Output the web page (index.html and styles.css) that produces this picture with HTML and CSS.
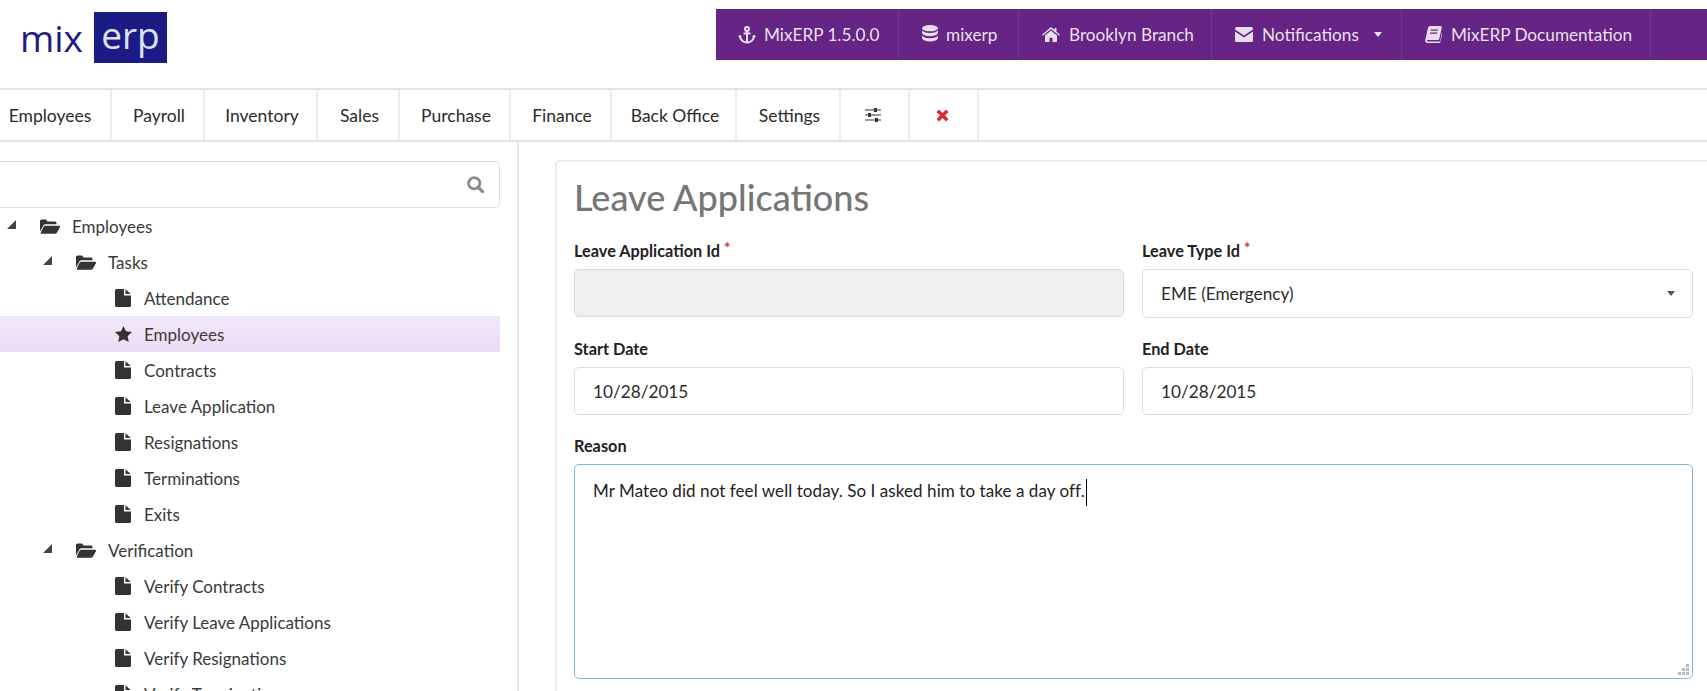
FILE: index.html
```html
<!DOCTYPE html>
<html lang="en">
<head>
<meta charset="utf-8">
<title>Leave Applications - MixERP</title>
<link rel="stylesheet" href="styles.css">
</head>
<body>
<svg class="defs" width="0" height="0" aria-hidden="true">
  <symbol id="i-file" viewBox="0 0 16 18"><path d="M1.5 0H9v6.5h7V16.5a1.5 1.5 0 0 1-1.5 1.5h-13A1.5 1.5 0 0 1 0 16.500V1.500A1.500 1.500 0 0 1 1.500 0zM10.500 0.300L15.700 5H10.500z"/></symbol>
  <symbol id="i-folder" viewBox="0 0 20 15"><path d="M0 12.500V2a1.500 1.500 0 0 1 1.500-1.500h4.500l1.500 2H15a1.500 1.500 0 0 1 1.500 1.500v1.200H5.500a2.500 2.500 0 0 0-2.200 1.300z"/><path d="M5 6.800h14a1 1 0 0 1 .9 1.400L17 13.500a2.500 2.500 0 0 1-2.200 1.300H1.500a.8.800 0 0 1-.7-1.200l2.700-5.800A2 2 0 0 1 5 6.800z"/></symbol>
  <symbol id="i-star" viewBox="0 0 18 17"><path d="M9 0l2.700 5.700 6.300.8-4.600 4.300 1.200 6.200L9 14l-5.600 3 1.200-6.200L0 6.500l6.300-.8z"/></symbol>
  <symbol id="i-anchor" viewBox="0 0 18 18"><g fill="none" stroke="currentColor" stroke-width="2"><circle cx="9" cy="3" r="2"/><path d="M9 5v11.500M5.500 7.500h7M2 10c0 4 3.500 6.500 7 6.500s7-2.500 7-6.500"/></g><path d="M0 11l2-2.500L4 11zM14 11l2-2.500 2 2.500z"/></symbol>
  <symbol id="i-db" viewBox="0 0 15 18"><ellipse cx="7.500" cy="3" rx="7.500" ry="3"/><path d="M0 5c1.500 2 4 2.600 7.500 2.600S13.500 7 15 5v2.800c-1 2-4 2.800-7.500 2.800S1 9.800 0 7.800zM0 10c1.500 2 4 2.600 7.500 2.600s6-.6 7.500-2.600v2.800c-1 2-4 2.800-7.500 2.800S1 14.800 0 12.800z"/></symbol>
  <symbol id="i-home" viewBox="0 0 18 15"><path d="M9 0l3.500 3V1h2v3.700L18 7.800l-.8 1L9 2 .8 8.800 0 7.800z"/><path d="M9 3.400l6 5V15h-4.500v-4.200h-3V15H3V8.400z"/></symbol>
  <symbol id="i-mail" viewBox="0 0 18 15"><path d="M1.500 0h15A1.500 1.500 0 0 1 18 1.500v1L9 8.500 0 2.500v-1A1.500 1.500 0 0 1 1.500 0zM0 4.500l9 6 9-6v9a1.500 1.500 0 0 1-1.500 1.500h-15A1.500 1.500 0 0 1 0 13.500z"/></symbol>
  <symbol id="i-book" viewBox="0 0 17 17"><path d="M5 0h10.500c1 0 1.500.8 1.300 1.700l-2.500 11c-.2.800-.8 1.300-1.600 1.300H2.500c-.8 0-.9 1.500.1 1.500h11.600c.5 0 .8-.3.900-.7l2-9.300.4 1-2.300 9.800c-.1.400-.5.700-1 .7H2.500C.8 17 0 15.500.2 14L3 2c.2-1 1-2 2-2zM6 3.500l-.3 1.200h7l.3-1.200zM5.300 6.500L5 7.700h7l.3-1.200z" fill-rule="evenodd"/></symbol>
  <symbol id="i-sliders" viewBox="0 0 16 14"><path d="M0 1.500h9v1H0zM12 1.500h4v1h-4zM9 0h3v4H9zM0 6.500h3v1H0zM6 6.500h10v1H6zM3 5h3v4H3zM0 11.500h10v1H0zM13 11.500h3v1h-3zM10 10h3v4h-3z"/></symbol>
  <symbol id="i-x" viewBox="0 0 13 13"><path d="M3 .5l3.500 3.500L10 .5 12.500 3 9 6.500l3.500 3.500-2.500 2.500L6.500 9 3 12.500.5 10 4 6.500.5 3z"/></symbol>
  <symbol id="i-search" viewBox="0 0 16 16"><circle cx="6.800" cy="6.800" r="5.300" fill="none" stroke="currentColor" stroke-width="2.600"/><path d="M10.500 10.500l4.200 4.200" stroke="currentColor" stroke-width="3" stroke-linecap="round"/></symbol>
</svg>

<header class="top">
  <a class="logo" href="#"><span class="logo-mix">mix</span><span class="logo-erp">erp</span></a>
  <nav class="topbar">
    <a class="topbar-item"><svg class="ti ti-anchor"><use href="#i-anchor"/></svg>MixERP 1.5.0.0</a>
    <a class="topbar-item"><svg class="ti ti-db"><use href="#i-db"/></svg>mixerp</a>
    <a class="topbar-item"><svg class="ti ti-home"><use href="#i-home"/></svg>Brooklyn Branch</a>
    <a class="topbar-item"><svg class="ti ti-mail"><use href="#i-mail"/></svg>Notifications<span class="caret caret-light"></span></a>
    <a class="topbar-item"><svg class="ti ti-book"><use href="#i-book"/></svg>MixERP Documentation</a>
    <a class="topbar-item"></a>
  </nav>
</header>

<nav class="menu">
  <a class="menu-item menu-first">Employees</a>
  <a class="menu-item">Payroll</a>
  <a class="menu-item">Inventory</a>
  <a class="menu-item">Sales</a>
  <a class="menu-item">Purchase</a>
  <a class="menu-item">Finance</a>
  <a class="menu-item">Back Office</a>
  <a class="menu-item">Settings</a>
  <a class="menu-item menu-icon"><svg class="mi-sliders"><use href="#i-sliders"/></svg></a>
  <a class="menu-item menu-icon"><svg class="mi-x"><use href="#i-x"/></svg></a>
</nav>

<div class="layout">
  <aside class="side">
    <div class="search"><svg class="search-icon"><use href="#i-search"/></svg></div>
    <ul class="tree">
      <li class="node l0"><span class="arrow"></span><svg class="ic-folder"><use href="#i-folder"/></svg>Employees</li>
      <li class="node l1"><span class="arrow"></span><svg class="ic-folder"><use href="#i-folder"/></svg>Tasks</li>
      <li class="node l2"><svg class="ic-file"><use href="#i-file"/></svg>Attendance</li>
      <li class="node l2 active"><svg class="ic-file ic-star"><use href="#i-star"/></svg>Employees</li>
      <li class="node l2"><svg class="ic-file"><use href="#i-file"/></svg>Contracts</li>
      <li class="node l2"><svg class="ic-file"><use href="#i-file"/></svg>Leave Application</li>
      <li class="node l2"><svg class="ic-file"><use href="#i-file"/></svg>Resignations</li>
      <li class="node l2"><svg class="ic-file"><use href="#i-file"/></svg>Terminations</li>
      <li class="node l2"><svg class="ic-file"><use href="#i-file"/></svg>Exits</li>
      <li class="node l1"><span class="arrow"></span><svg class="ic-folder"><use href="#i-folder"/></svg>Verification</li>
      <li class="node l2"><svg class="ic-file"><use href="#i-file"/></svg>Verify Contracts</li>
      <li class="node l2"><svg class="ic-file"><use href="#i-file"/></svg>Verify Leave Applications</li>
      <li class="node l2"><svg class="ic-file"><use href="#i-file"/></svg>Verify Resignations</li>
      <li class="node l2"><svg class="ic-file"><use href="#i-file"/></svg>Verify Terminations</li>
    </ul>
  </aside>

  <main class="main">
    <section class="card">
      <h1 class="title">Leave Applications</h1>
      <form class="form">
        <div class="field">
          <label class="label">Leave Application Id<span class="req">*</span></label>
          <div class="control control-disabled"></div>
        </div>
        <div class="field">
          <label class="label">Leave Type Id<span class="req">*</span></label>
          <div class="control control-select">EME (Emergency)<span class="caret"></span></div>
        </div>
        <div class="field">
          <label class="label">Start Date</label>
          <div class="control">10/28/2015</div>
        </div>
        <div class="field">
          <label class="label">End Date</label>
          <div class="control">10/28/2015</div>
        </div>
        <div class="field field-wide">
          <label class="label">Reason</label>
          <div class="control-area"><span class="area-text">Mr Mateo did not feel well today. So I asked him to take a day off.</span><span class="text-caret"></span><span class="grip"></span></div>
        </div>
      </form>
    </section>
  </main>
</div>
</body>
</html>
```
FILE: styles.css
```css
* { box-sizing: border-box; }
html, body { margin: 0; padding: 0; height: 691px; overflow: hidden; background: #fff; }
body { font-family: "Lato", "Open Sans", sans-serif; font-size: 16px; color: #333; }
.defs { position: absolute; }

.top { height: 88px; display: flex; align-items: flex-start; justify-content: space-between; }
.logo { display: flex; align-items: center; height: 51px; margin: 12px 0 0 20px; text-decoration: none; }
.logo-mix { width: 74px; font-family: "Open Sans", sans-serif; font-size: 37px; font-weight: 400; color: #1e1c82; line-height: 51px; }
.logo-erp { width: 73px; height: 51px; background: #1b1b85; color: #dfe0f2; font-family: "Open Sans", sans-serif; font-size: 37px; font-weight: 400; line-height: 46px; text-align: center; }

.topbar { margin-top: 9px; height: 51px; width: 991px; background: #662484; display: grid; grid-template-columns: 183px 120px 193px 190px 249px 56px; }
.topbar-item { display: flex; align-items: center; padding-left: 23px; border-right: 1px solid rgba(255,255,255,.09); color: rgba(255,255,255,.88); font-size: 17.2px; white-space: nowrap; }
.topbar-item:last-child { border-right: 0; }
.ti { fill: currentColor; color: rgba(255,255,255,.85); flex: none; margin-right: 8px; }
.ti-anchor { width: 18px; height: 18px; margin-left: -1px; }
.ti-db { width: 16px; height: 19px; }
.ti-home { width: 18px; height: 15px; margin-right: 9px; }
.ti-mail { width: 18px; height: 15px; margin-right: 9px; }
.ti-book { width: 17px; height: 17px; margin-right: 9px; }
.caret { display: inline-block; width: 0; height: 0; border-left: 4px solid transparent; border-right: 4px solid transparent; border-top: 5px solid #555; }
.caret-light { border-top-color: rgba(255,255,255,.85); margin-left: 15px; }

.menu { height: 54px; display: grid; grid-template-columns: 112px 93px 113px 82px 111px 101px 125px 104px 69px 69px 1fr; border-top: 2px solid #e2e2e2; border-bottom: 2px solid #e2e2e2; }
.menu-item { display: flex; align-items: center; justify-content: center; padding-left: 3px; border-right: 2px solid #ececec; font-size: 17.5px; color: #2b2b2b; white-space: nowrap; }
.menu-first { padding: 0 10px 0 0; }
.menu-icon { padding: 0 3px 0 0; }
.mi-sliders { width: 16px; height: 14px; fill: #2f3640; }
.mi-x { width: 13px; height: 13px; fill: #db2b33; }

.layout { display: flex; height: 549px; overflow: hidden; }
.side { width: 519px; flex: none; border-right: 2px solid #e8e8e8; padding-top: 19px; }
.search { width: 500px; height: 47px; border: 1px solid #dedede; border-left: 0; border-radius: 0 5px 5px 0; display: flex; align-items: center; justify-content: flex-end; padding-right: 15px; }
.search-icon { width: 17px; height: 17px; color: #8a8a8a; fill: #8a8a8a; }
.tree { list-style: none; margin: 0; padding: 0; width: 500px; }
.node { height: 36px; display: flex; align-items: center; font-size: 17px; color: #3a3a3a; white-space: nowrap; position: relative; }
.l0 { padding-left: 40px; }
.l1 { padding-left: 76px; }
.l2 { padding-left: 115px; }
.arrow { position: absolute; top: 12px; width: 0; height: 0; border-style: solid; border-width: 0 0 9px 9px; border-color: transparent transparent #444 transparent; }
.l0 .arrow { left: 7px; }
.l1 .arrow { left: 43px; }
.ic-folder { width: 20px; height: 15px; fill: #333; margin-right: 12px; flex: none; }
.ic-file { width: 16px; height: 18px; fill: #333; margin-right: 13px; flex: none; }
.ic-star { width: 17px; height: 16px; margin-right: 12px; }
.active { background: linear-gradient(#f2e7f9, #ebdcf5); }

.main { flex: 1; padding: 18px 0 0 36px; min-width: 0; }
.card { height: 600px; margin-right: -20px; border: 2px solid #ececec; border-right: 0; border-bottom: 0; border-radius: 5px 0 0 0; padding: 14px 34px 0 17px; }
.title { margin: 0; font-size: 36px; line-height: 42px; font-weight: 500; color: #767676; }
.form { display: grid; grid-template-columns: 550px 551px; column-gap: 18px; row-gap: 19px; margin-top: 21px; }
.field-wide { grid-column: 1 / -1; }
.label { display: block; height: 24px; margin-bottom: 6px; font-size: 16.3px; font-weight: 700; line-height: 24px; color: #222; white-space: nowrap; }
.req { color: #db2828; font-size: 15px; margin-left: 4px; position: relative; top: -4px; }
.control { height: 48px; border: 1px solid #dcdcdc; border-radius: 5px; padding: 1px 18px 0; display: flex; align-items: center; font-size: 17.2px; color: #2b2b2b; background: #fff; position: relative; }
.control-disabled { background: #efefef; }
.control-select { justify-content: space-between; padding: 0 17px 0 18px; height: 49px; }
.control-area { height: 215px; border: 1px solid #7db8dc; border-radius: 5px; padding: 12px 18px; font-size: 17px; letter-spacing: .07px; line-height: 28px; color: #222; position: relative; }
.text-caret { display: inline-block; width: 1px; height: 27px; background: #000; vertical-align: middle; margin-left: 1px; }
.grip { position: absolute; right: 3px; bottom: 3px; width: 11px; height: 11px; background:
  linear-gradient(#bbb,#bbb) 8px 0/3px 3px no-repeat,
  linear-gradient(#bbb,#bbb) 4px 4px/3px 3px no-repeat,
  linear-gradient(#bbb,#bbb) 8px 4px/3px 3px no-repeat,
  linear-gradient(#bbb,#bbb) 0 8px/3px 3px no-repeat,
  linear-gradient(#bbb,#bbb) 4px 8px/3px 3px no-repeat,
  linear-gradient(#bbb,#bbb) 8px 8px/3px 3px no-repeat; }
```
